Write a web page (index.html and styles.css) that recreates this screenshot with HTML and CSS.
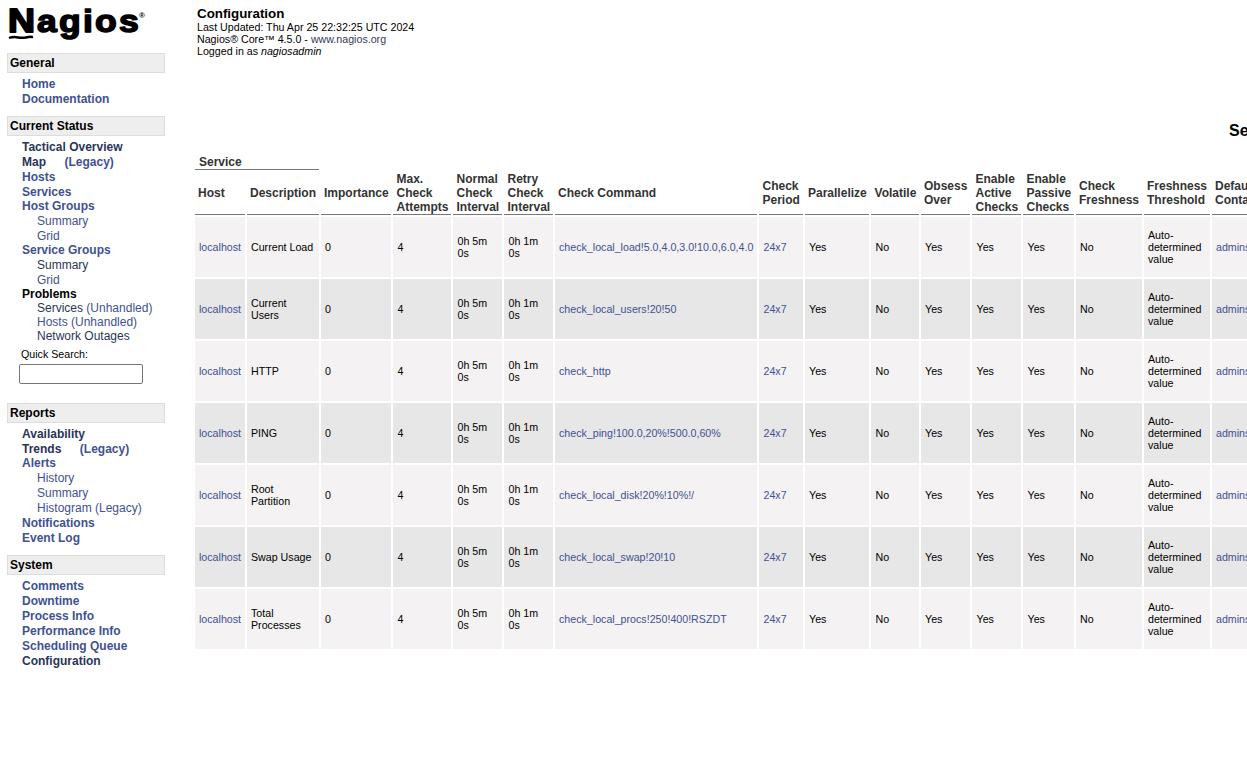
FILE: index.html
```html
<!DOCTYPE html>
<html lang="en">
<head>
<meta charset="utf-8">
<title>Nagios Core</title>
<link rel="stylesheet" href="styles.css">
</head>
<body>
<div class="page">
<aside class="side">
<svg class="logo" width="145" height="46" viewBox="0 0 145 46" role="img" aria-label="Nagios">
<text class="logo-n" x="1" y="31.500" textLength="27" lengthAdjust="spacingAndGlyphs">N</text>
<text class="logo-rest" x="30" y="32" textLength="104" lengthAdjust="spacingAndGlyphs">agios</text>
<path class="logo-line" d="M3 37.600q4-1 8-.2t8 0 6-.4"/>
<text class="logo-reg" x="132" y="17.500">®</text>
</svg>
<section class="group general"><h2>General</h2>
<ul><li><a>Home</a></li><li><a>Documentation</a></li></ul></section>
<section class="group status"><h2>Current Status</h2>
<ul>
<li><a class="seen">Tactical Overview</a></li>
<li><a class="seen">Map</a><a class="legacy">(Legacy)</a></li>
<li><a>Hosts</a></li>
<li class="tight"><a>Services</a></li>
<li><a>Host Groups</a></li>
<li class="sub"><a>Summary</a></li>
<li class="sub tight"><a>Grid</a></li>
<li><a>Service Groups</a></li>
<li class="sub"><a class="seen">Summary</a></li>
<li class="sub tight"><a>Grid</a></li>
<li class="plain tight">Problems</li>
<li class="sub tight"><a class="seen">Services</a> <a>(Unhandled)</a></li>
<li class="sub tight"><a>Hosts</a> <a>(Unhandled)</a></li>
<li class="sub tight"><a class="seen">Network Outages</a></li>
</ul>
<form class="search"><label for="q">Quick Search:</label><input id="q" type="text"></form>
</section>
<section class="group reports"><h2>Reports</h2>
<ul>
<li><a class="seen">Availability</a></li>
<li class="tight"><a class="seen">Trends</a><a class="legacy">(Legacy)</a></li>
<li><a>Alerts</a></li>
<li class="sub"><a>History</a></li>
<li class="sub"><a>Summary</a></li>
<li class="sub"><a>Histogram (Legacy)</a></li>
<li><a>Notifications</a></li>
<li><a>Event Log</a></li>
</ul></section>
<section class="group system"><h2>System</h2>
<ul>
<li><a>Comments</a></li><li><a>Downtime</a></li><li><a>Process Info</a></li><li><a>Performance Info</a></li><li><a>Scheduling Queue</a></li><li><a class="seen">Configuration</a></li>
</ul></section>
</aside>
<main class="main">
<header class="info">
<h1>Configuration</h1>
<p>Last Updated: Thu Apr 25 22:32:25 UTC 2024</p>
<p>Nagios® Core™ 4.5.0 - <a class="site">www.nagios.org</a></p>
<p>Logged in as <i>nagiosadmin</i></p>
</header>
<div class="title">Services</div>
<table class="grid">
<colgroup><col class="w50"><col class="w72"><col class="w70"><col class="w58"><col class="w49"><col class="w49"><col class="w202"><col class="w44"><col class="w64"><col class="w48"><col class="w49"><col class="w49"><col class="w51"><col class="w66"><col class="w66"><col class="w100"></colgroup>
<thead>
<tr class="over"><th colspan="2">Service</th></tr>
<tr><th>Host</th><th>Description</th><th>Importance</th><th>Max.<br>Check<br>Attempts</th><th>Normal<br>Check<br>Interval</th><th>Retry<br>Check<br>Interval</th><th>Check Command</th><th>Check<br>Period</th><th>Parallelize</th><th>Volatile</th><th>Obsess<br>Over</th><th>Enable<br>Active<br>Checks</th><th>Enable<br>Passive<br>Checks</th><th>Check<br>Freshness</th><th>Freshness<br>Threshold</th><th>Default<br>Contacts/Groups</th></tr>
</thead>
<tbody>
<tr><td><a>localhost</a></td><td>Current Load</td><td>0</td><td>4</td><td>0h 5m<br>0s</td><td>0h 1m<br>0s</td><td><a>check_local_load!5.0,4.0,3.0!10.0,6.0,4.0</a></td><td><a>24x7</a></td><td>Yes</td><td>No</td><td>Yes</td><td>Yes</td><td>Yes</td><td>No</td><td>Auto-<br>determined<br>value</td><td><a>admins</a></td></tr>
<tr><td><a>localhost</a></td><td>Current<br>Users</td><td>0</td><td>4</td><td>0h 5m<br>0s</td><td>0h 1m<br>0s</td><td><a>check_local_users!20!50</a></td><td><a>24x7</a></td><td>Yes</td><td>No</td><td>Yes</td><td>Yes</td><td>Yes</td><td>No</td><td>Auto-<br>determined<br>value</td><td><a>admins</a></td></tr>
<tr><td><a>localhost</a></td><td>HTTP</td><td>0</td><td>4</td><td>0h 5m<br>0s</td><td>0h 1m<br>0s</td><td><a>check_http</a></td><td><a>24x7</a></td><td>Yes</td><td>No</td><td>Yes</td><td>Yes</td><td>Yes</td><td>No</td><td>Auto-<br>determined<br>value</td><td><a>admins</a></td></tr>
<tr><td><a>localhost</a></td><td>PING</td><td>0</td><td>4</td><td>0h 5m<br>0s</td><td>0h 1m<br>0s</td><td><a>check_ping!100.0,20%!500.0,60%</a></td><td><a>24x7</a></td><td>Yes</td><td>No</td><td>Yes</td><td>Yes</td><td>Yes</td><td>No</td><td>Auto-<br>determined<br>value</td><td><a>admins</a></td></tr>
<tr><td><a>localhost</a></td><td>Root<br>Partition</td><td>0</td><td>4</td><td>0h 5m<br>0s</td><td>0h 1m<br>0s</td><td><a>check_local_disk!20%!10%!/</a></td><td><a>24x7</a></td><td>Yes</td><td>No</td><td>Yes</td><td>Yes</td><td>Yes</td><td>No</td><td>Auto-<br>determined<br>value</td><td><a>admins</a></td></tr>
<tr><td><a>localhost</a></td><td>Swap Usage</td><td>0</td><td>4</td><td>0h 5m<br>0s</td><td>0h 1m<br>0s</td><td><a>check_local_swap!20!10</a></td><td><a>24x7</a></td><td>Yes</td><td>No</td><td>Yes</td><td>Yes</td><td>Yes</td><td>No</td><td>Auto-<br>determined<br>value</td><td><a>admins</a></td></tr>
<tr><td><a>localhost</a></td><td>Total<br>Processes</td><td>0</td><td>4</td><td>0h 5m<br>0s</td><td>0h 1m<br>0s</td><td><a>check_local_procs!250!400!RSZDT</a></td><td><a>24x7</a></td><td>Yes</td><td>No</td><td>Yes</td><td>Yes</td><td>Yes</td><td>No</td><td>Auto-<br>determined<br>value</td><td><a>admins</a></td></tr>
</tbody>
</table>
</main>
</div>
</body>
</html>
```
FILE: styles.css
```css
* { box-sizing: border-box; }
html, body { margin: 0; height: 100%; overflow: hidden; }
body { background: #fff; color: #000; font: 10.67px/12px "Liberation Sans", Arial, sans-serif; }
h1, h2, p, ul { margin: 0; padding: 0; }
a { color: #3f5192; text-decoration: none; }
a.seen { color: #2a3557; }

.page { display: flex; width: 1247px; height: 781px; overflow: hidden; }
.side { flex: 0 0 193px; padding-left: 7px; }
.logo { display: block; height: 46px; }
.logo text { font-family: "Liberation Sans", Arial, sans-serif; font-weight: bold; fill: #000; }
.logo .logo-n { font-size: 32.5px; stroke: #000; stroke-width: 1.8px; stroke-linejoin: round; }
.logo .logo-rest { font-size: 31.5px; letter-spacing: 2px; stroke: #000; stroke-width: 1.5px; stroke-linejoin: round; }
.logo .logo-reg { font-size: 8px; }
.logo-line { fill: none; stroke: #000; stroke-width: 2.5px; stroke-linecap: round; }

.group h2 { width: 158px; height: 20px; padding-left: 2px; border: 1px solid #ddd; background: #eee; font-size: 12px; line-height: 18px; }
.group ul { list-style: none; padding: 4px 0 0 15px; font-size: 12px; font-weight: bold; }
.group li { height: 15px; line-height: 15px; white-space: nowrap; }
.group li.tight { height: 14px; }
.group li.sub { padding-left: 15px; font-weight: normal; }
.legacy { margin-left: 18.5px; }
.general { margin-top: 7px; }
.status { margin-top: 9px; }
.reports { margin-top: 19px; }
.system { margin-top: 9px; }
.search { padding: 5px 0 0 12px; }
.search label { display: block; padding-left: 2px; margin-bottom: 4px; }
.search input { display: block; width: 124px; height: 20px; border: 1px solid #767676; border-radius: 2px; background: #fff; }

.main { flex: 0 0 auto; }
.info { height: 122px; padding: 7px 0 0 4px; }
.info h1 { font-size: 13.33px; line-height: 14px; }
.site { color: #333a55; }
.title { padding-left: 1036px; height: 30px; font-size: 16px; line-height: 18px; font-weight: bold; }
.grid { table-layout: fixed; width: 1121px; border-spacing: 2px; border-collapse: separate; }
.grid th { height: 43px; padding: 0 3px; border-bottom: 1px solid #777; color: #333; font-size: 12px; line-height: 14px; text-align: left; white-space: nowrap; }
.grid .over th { height: 16px; padding-left: 4px; }
.grid td { height: 60px; padding: 0 4px; background: #f4f2f2; vertical-align: middle; white-space: nowrap; }
.grid th:is(:nth-child(4), :nth-child(5), :nth-child(6), :nth-child(8), :nth-child(10), :nth-child(12), :nth-child(13)) { padding-left: 3.5px; padding-right: 0; }
.grid td:is(:nth-child(4), :nth-child(5), :nth-child(6), :nth-child(8), :nth-child(10), :nth-child(12), :nth-child(13)) { padding-left: 4.5px; }
.grid tbody tr:nth-child(even) td { background: #e7e7e7; }
.w44 { width: 44px; }
.w48 { width: 48px; }
.w49 { width: 49px; }
.w50 { width: 50px; }
.w51 { width: 51px; }
.w58 { width: 58px; }
.w64 { width: 64px; }
.w66 { width: 66px; }
.w70 { width: 70px; }
.w72 { width: 72px; }
.w100 { width: 100px; }
.w202 { width: 202px; }
```
